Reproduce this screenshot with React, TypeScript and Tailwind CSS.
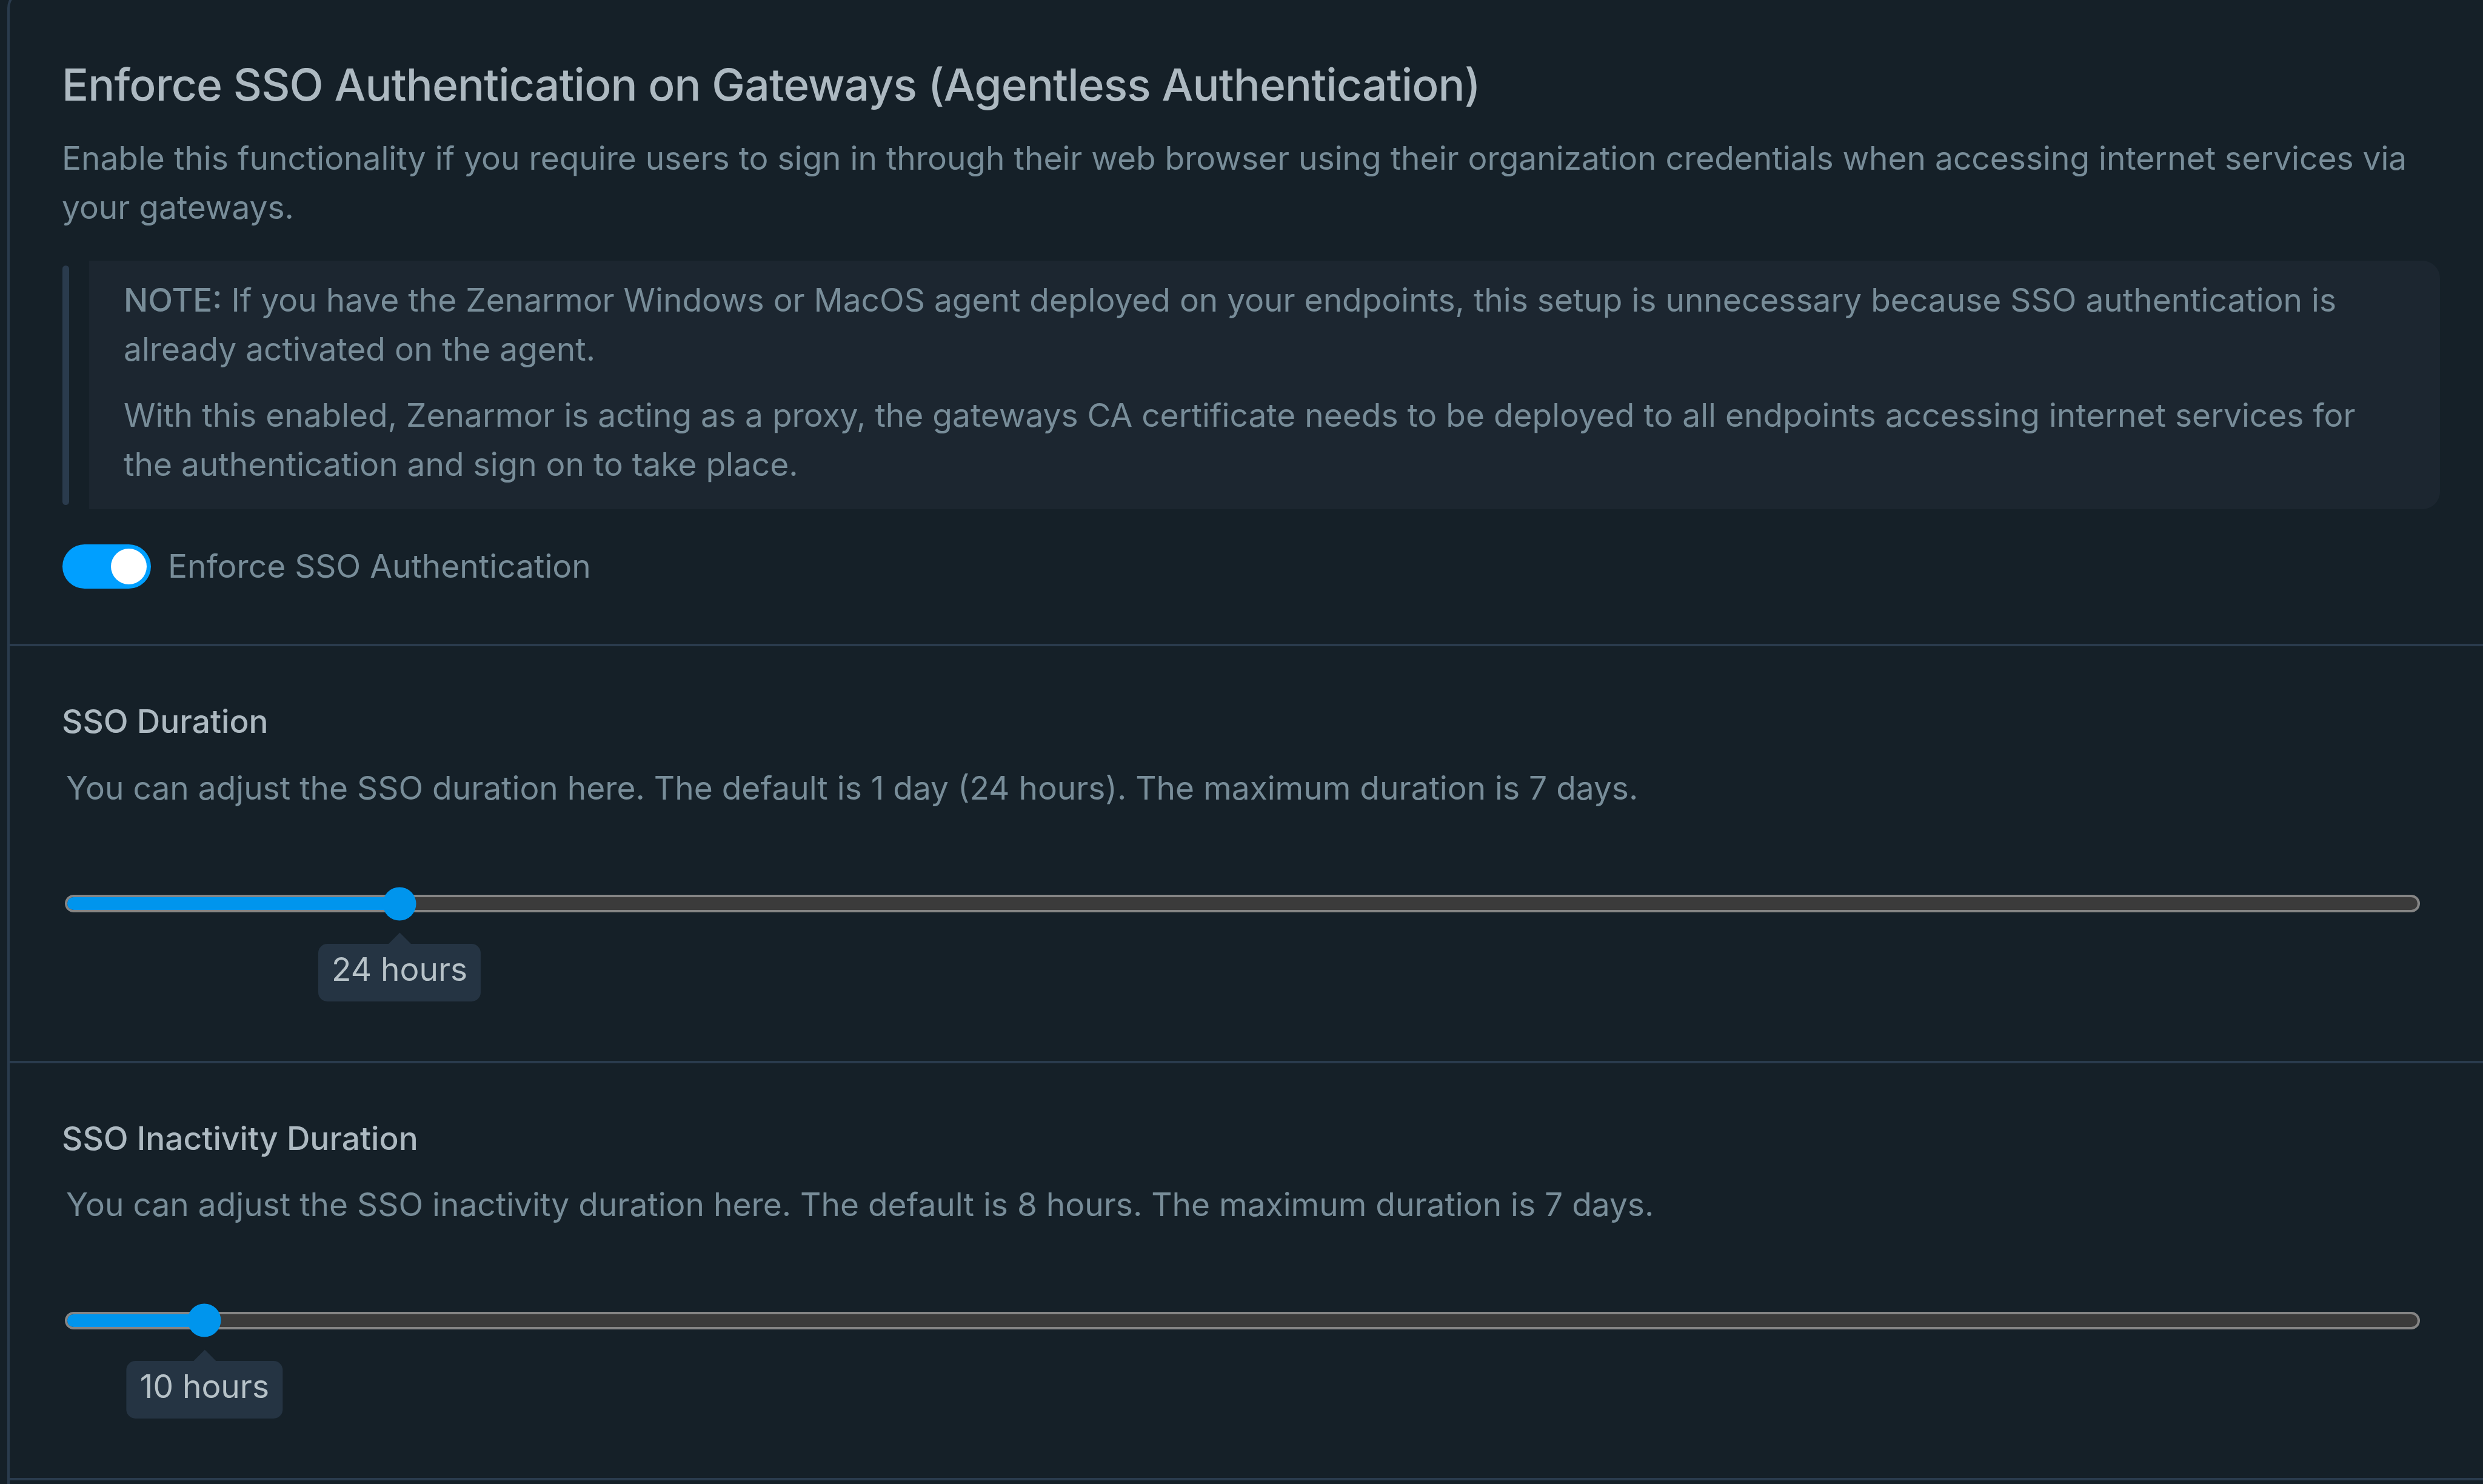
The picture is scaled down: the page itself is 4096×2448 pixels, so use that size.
import { useState } from 'react'

interface DurationProps {
  title: string
  description: string
  value: string
  percent: number
}

function Switch({ checked, onChange }: { checked: boolean; onChange: (v: boolean) => void }) {
  return (
    <button
      role="switch"
      aria-checked={checked}
      onClick={() => onChange(!checked)}
      className={`flex h-[73px] w-[146px] shrink-0 items-center rounded-full px-[7px] cursor-pointer ${
        checked ? 'justify-end bg-[#009fff]' : 'justify-start bg-[#2a3b4d]'
      }`}
    >
      <span className="size-[59px] rounded-full bg-white" />
    </button>
  )
}

function Slider({ value, percent }: { value: string; percent: number }) {
  return (
    <div className="relative mt-[136px] ml-[3px] h-[29px] w-[3885px]">
      <div className="h-full overflow-hidden rounded-full border-4 border-[#858585] bg-[#3b3b3b]">
        <div className="h-full bg-[#0095ed]" style={{ width: `${percent}%` }} />
      </div>

      {/* Thumb */}
      <span
        className="absolute top-1/2 size-[55px] -translate-x-1/2 -translate-y-1/2 rounded-full bg-[#0095ed]"
        style={{ left: `${percent}%` }}
      />

      {/* Value tooltip */}
      <div
        className="absolute top-[62px] flex -translate-x-1/2 flex-col items-center"
        style={{ left: `${percent}%` }}
      >
        <svg width="37" height="19" viewBox="0 0 37 19" className="text-[#253443]">
          <path d="M18.5 0.5 37 19H0z" fill="currentColor" />
        </svg>
        <span className="h-[95px] rounded-[15px] bg-[#253443] px-[22px] pt-[2px] leading-[80px] whitespace-nowrap text-[#b7c2c8]">
          {value}
        </span>
      </div>
    </div>
  )
}

function DurationSection({ title, description, value, percent }: DurationProps) {
  return (
    <section className="h-[687.7px] border-b-4 border-[#2a3b4d] pt-[84px] pl-[88px]">
      <h3 className="-ml-[2px] font-medium text-[#adb9c1]">{title}</h3>
      <p className="mt-[29px] ml-[5px]">{description}</p>
      <Slider value={value} percent={percent} />
    </section>
  )
}

export default function App() {
  const [enforced, setEnforced] = useState(true)

  return (
    <div className="h-[2448px] w-[4096px] overflow-hidden bg-[#152028] pl-[12px] font-['Inter',sans-serif] text-[53.26px] leading-[80.5px] text-[#788d99]">
      <div className="-mt-[16px] h-[2600px] rounded-tl-[29px] border-t-4 border-l-4 border-[#2a3b4d]">
        {/* Enforce SSO */}
        <section className="h-[1078.3px] border-b-4 border-[#2a3b4d] pt-[97px] pr-[71px] pl-[87px]">
          <h2 className="-ml-[1px] text-[73.16px] leading-[110px] font-medium tracking-[-0.86px] text-[#adb9c1]">
            Enforce SSO Authentication on Gateways (Agentless Authentication)
          </h2>
          <p className="mt-[26px] -ml-[1px]">
            Enable this functionality if you require users to sign in through their web browser using their
            organization credentials when accessing internet services via your gateways.
          </p>

          <div className="mt-[48px] flex items-center">
            <span className="h-[395px] w-[11px] rounded-full bg-[#2a3b4d]" />
            <div className="ml-[33px] flex h-[410px] flex-1 flex-col gap-[29px] rounded-r-[29px] bg-[#1c2630] pt-[25px] pr-[58px] pl-[57px]">
              <p>
                <strong className="font-medium">NOTE:</strong> If you have the Zenarmor Windows or MacOS agent
                deployed on your endpoints, this setup is unnecessary because SSO authentication is already
                activated on the agent.
              </p>
              <p>
                With this enabled, Zenarmor is acting as a proxy, the gateways CA certificate needs to be
                deployed to all endpoints accessing internet services for the authentication and sign on to
                take place.
              </p>
            </div>
          </div>

          <div className="mt-[58px] flex h-[73px] items-center gap-[28px]">
            <Switch checked={enforced} onChange={setEnforced} />
            <span className="pb-px">Enforce SSO Authentication</span>
          </div>
        </section>

        <DurationSection
          title="SSO Duration"
          description="You can adjust the SSO duration here. The default is 1 day (24 hours). The maximum duration is 7 days."
          value="24 hours"
          percent={14.21}
        />
        <DurationSection
          title="SSO Inactivity Duration"
          description="You can adjust the SSO inactivity duration here. The default is 8 hours. The maximum duration is 7 days."
          value="10 hours"
          percent={5.93}
        />
      </div>
    </div>
  )
}
